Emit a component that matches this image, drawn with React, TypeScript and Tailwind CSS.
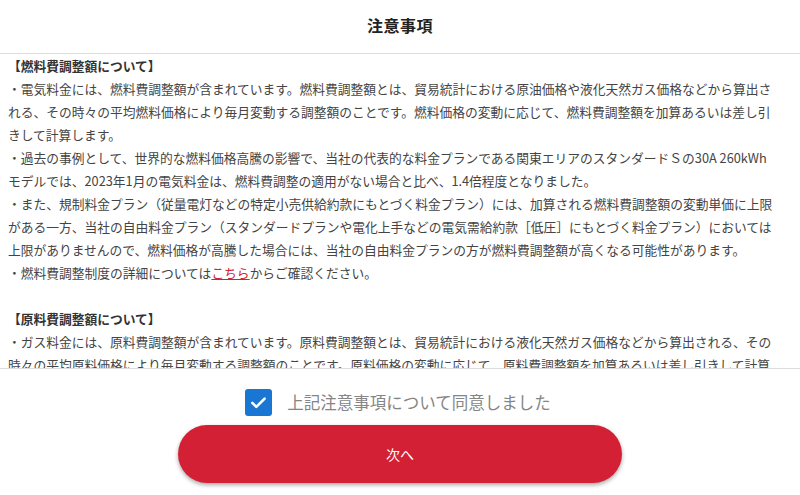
import React, { useState } from 'react';

const font = { fontFamily: '"Noto Sans CJK JP", "Noto Sans", sans-serif' };

const Lines = ({ lines }: { lines: React.ReactNode[] }) => (
  <>
    {lines.map((l, i) => (
      <div key={i} className="h-[23px] whitespace-nowrap">
        {l}
      </div>
    ))}
  </>
);

export default function App() {
  const [agreed, setAgreed] = useState(true);

  return (
    <div className="w-[800px] h-[495px] bg-white flex flex-col overflow-hidden text-[#333]" style={font}>
      <div className="h-[54px] shrink-0 flex items-center justify-center border-b border-[#dedede]">
        <h1 className="text-[16px] font-bold text-[#222] tracking-[0.5px] -mt-[3px]">注意事項</h1>
      </div>

      {/* the text box scrolls in the original, the last line is cut by its border */}
      <div className="h-[315px] shrink-0 overflow-hidden border-b border-[#dcdcdc] pl-[8px] pr-[22px] pt-0 text-[12.75px] leading-[23px] text-[#444]">
        <Lines
          lines={[
            <span className="font-bold text-[#333]">【燃料費調整額について】</span>,
            '・電気料金には、燃料費調整額が含まれています。燃料費調整額とは、貿易統計における原油価格や液化天然ガス価格などから算出さ',
            'れる、その時々の平均燃料価格により毎月変動する調整額のことです。燃料価格の変動に応じて、燃料費調整額を加算あるいは差し引',
            'きして計算します。',
            '・過去の事例として、世界的な燃料価格高騰の影響で、当社の代表的な料金プランである関東エリアのスタンダードＳの30A 260kWh',
            'モデルでは、2023年1月の電気料金は、燃料費調整の適用がない場合と比べ、1.4倍程度となりました。',
            '・また、規制料金プラン（従量電灯などの特定小売供給約款にもとづく料金プラン）には、加算される燃料費調整額の変動単価に上限',
            'がある一方、当社の自由料金プラン（スタンダードプランや電化上手などの電気需給約款［低圧］にもとづく料金プラン）においては',
            '上限がありませんので、燃料価格が高騰した場合には、当社の自由料金プランの方が燃料費調整額が高くなる可能性があります。',
            <>
              ・燃料費調整制度の詳細については
              <a href="#" className="text-[#d42035] underline">
                こちら
              </a>
              からご確認ください。
            </>,
            '',
            <span className="font-bold text-[#333]">【原料費調整額について】</span>,
            '・ガス料金には、原料費調整額が含まれています。原料費調整額とは、貿易統計における液化天然ガス価格などから算出される、その',
            '時々の平均原料価格により毎月変動する調整額のことです。原料価格の変動に応じて、原料費調整額を加算あるいは差し引きして計算',
          ]}
        />
      </div>

      <div className="flex flex-col items-center">
        <label className="mt-[20px] flex items-center gap-[15px] cursor-pointer select-none -ml-[4px]">
          <span
            onClick={() => setAgreed(!agreed)}
            className={`w-[27px] h-[27px] rounded-[3px] flex items-center justify-center ${
              agreed ? 'bg-[#1976d2]' : 'border-2 border-[#888] bg-white'
            }`}
          >
            {agreed && (
              <svg viewBox="0 0 24 24" className="w-[21px] h-[21px]" fill="none" stroke="white" strokeWidth="3" strokeLinecap="round" strokeLinejoin="round">
                <path d="M5 12.5l4.5 4.5L19 7.5" />
              </svg>
            )}
          </span>
          <span className="text-[16.5px] text-[#858585]">上記注意事項について同意しました</span>
        </label>

        <button className="mt-[9px] w-[444px] h-[58px] rounded-full bg-[#d42035] text-white text-[14px] shadow-[0_2px_4px_rgba(0,0,0,0.35)]">
          次へ
        </button>
      </div>
    </div>
  );
}
